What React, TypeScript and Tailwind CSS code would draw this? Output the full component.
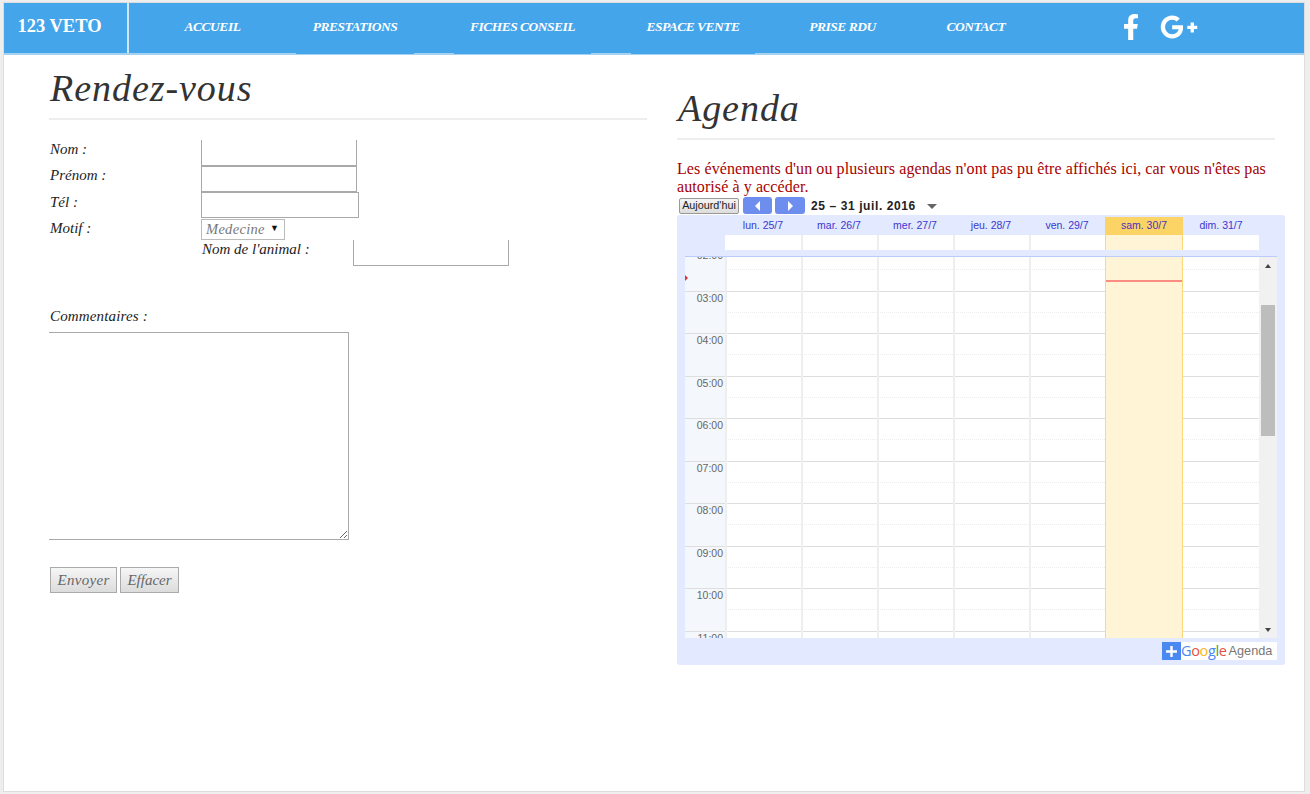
import { FaFacebookF, FaGooglePlusG } from "react-icons/fa";

const serif = "font-['Liberation_Serif',serif]";
const arial = "font-['Liberation_Sans',Arial,sans-serif]";

const nav = [
  { label: "ACCUEIL", mark: false, width: "w-[87px]" },
  { label: "PRESTATIONS", mark: true, width: "w-[118px]" },
  { label: "FICHES CONSEIL", mark: true, width: "w-[137px]" },
  { label: "ESPACE VENTE", mark: true, width: "w-[124px]" },
  { label: "PRISE RDU", mark: false, width: "w-[95px]" },
  { label: "CONTACT", mark: false, width: "w-[92px]" },
];

const days = ["lun. 25/7", "mar. 26/7", "mer. 27/7", "jeu. 28/7", "ven. 29/7", "sam. 30/7", "dim. 31/7"];
const hours = ["02:00", "03:00", "04:00", "05:00", "06:00", "07:00", "08:00", "09:00", "10:00", "11:00"];

const dayWidth = (d: string) => (d.startsWith("sam") ? "w-[78px]" : "w-[76px]");

function Header() {
  return (
    <header className="flex h-[52px] bg-[#45a5ea] border-b-2 border-[#a6d2f0] text-white">
      <div className={`w-[123px] flex items-center justify-center pr-[12px] pb-[2px] text-[18.5px] font-bold whitespace-nowrap ${serif}`}>123 VETO</div>
      <div className="w-[2px] bg-[#cfe6f8]" />
      <nav className="flex ml-[40px] gap-[40px]">
        {nav.map((n) => (
          <a key={n.label} className={`relative flex items-center justify-center ${n.width} text-[13.5px] font-bold italic tracking-[-0.5px] whitespace-nowrap pb-[2px] ${serif}`}>
            {n.label}
            {n.mark && <span className="absolute left-0 right-0 -bottom-px h-px bg-[#45a5ea]" />}
          </a>
        ))}
      </nav>
      <div className="flex items-center ml-[96px] gap-[16px] pb-[3px]">
        <FaFacebookF className="text-[26px]" />
        <FaGooglePlusG className="text-[38px]" />
      </div>
    </header>
  );
}

const labelCls = `text-[15px] leading-[19px] italic text-[#222] ${serif}`;
const inputCls = "block bg-white border border-[#a9a9a9] outline-none";

function Form() {
  return (
    <section className="w-[598px]">
      <h1 className={`h-[65px] border-b-2 border-[#eee] flex items-center pt-[4px] pl-px text-[38px] italic text-[#333] tracking-[0.95px] ${serif}`}>Rendez-vous</h1>
      <form className="mt-[20px]">
        <div className="flex h-[26px]">
          <label className={`w-[152px] pl-px ${labelCls}`}>Nom :</label>
          <input className={`${inputCls} w-[156px] h-[26px] border-t-0`} />
        </div>
        <div className="flex h-[26px]">
          <label className={`w-[152px] pl-px ${labelCls}`}>Prénom :</label>
          <input className={`${inputCls} w-[156px] h-[26px]`} />
        </div>
        <div className="flex h-[27px]">
          <label className={`w-[152px] pl-px pt-px ${labelCls}`}>Tél :</label>
          <input className={`${inputCls} w-[158px] h-[26px]`} />
        </div>
        <div className="flex h-[21px]">
          <label className={`w-[152px] pl-px ${labelCls}`}>Motif :</label>
          <div className="relative w-[84px] h-[21px]">
            <select className={`appearance-none block w-full h-full bg-white border border-[#bbb] pl-[4px] pb-[1px] text-[14.5px] leading-[17px] italic text-[#777] tracking-[0.3px] outline-none ${serif}`}>
              <option>Medecine</option>
            </select>
            <span className={`absolute right-[6px] top-[2px] text-[9px] leading-[14px] text-[#111] ${arial}`}>▼</span>
          </div>
        </div>
        <div className="flex h-[26px] pl-[152px]">
          <label className={`w-[152px] pl-px ${labelCls} text-[#111]`}>Nom de l'animal :</label>
          <input className={`${inputCls} w-[156px] h-[26px] border-t-0`} />
        </div>
        <label className={`block mt-[41px] pl-px tracking-[0.15px] ${labelCls}`}>Commentaires :</label>
        <textarea className={`${inputCls} mt-[6px] w-[300px] h-[208px] border-l-0 resize-y`} />
        <div className="flex gap-[3px] mt-[27px] ml-px">
          <button type="button" className={`w-[67px] h-[26px] border border-[#aaa] bg-gradient-to-b from-[#f6f6f6] to-[#dcdcdc] text-[15px] italic text-[#666] tracking-[0.3px] ${serif}`}>Envoyer</button>
          <button type="button" className={`w-[59px] h-[26px] border border-[#aaa] bg-gradient-to-b from-[#f6f6f6] to-[#dcdcdc] text-[15px] italic text-[#666] ${serif}`}>Effacer</button>
        </div>
      </form>
    </section>
  );
}

function DayColumn({ day }: { day: string }) {
  const today = day.startsWith("sam");
  const last = day.startsWith("dim");
  return (
    <div className={`relative ${dayWidth(day)} ${today ? "bg-[#fff5d6]" : "bg-white"}`}>
      {!today && (
        <div className="mt-[-8.75px]">
          {hours.map((h) => (
            <div key={h} className="h-[42.5px] border-t border-[#dedede]">
              <div className="h-[21px] border-b border-dotted border-[#ececec]" />
            </div>
          ))}
        </div>
      )}
      {!last && <div className={`absolute inset-y-0 left-0 ${today ? "w-px bg-[#fcd87a]" : "w-[2px] bg-[#eeeeee]"}`} />}
      {today && <div className="absolute inset-y-0 right-0 w-px bg-[#fcd87a]" />}
      {today && <div className="absolute left-px right-px top-[23px] h-[2px] bg-[#f98d82]" />}
    </div>
  );
}

function Agenda() {
  return (
    <section className="w-[598px]">
      <h1 className={`h-[65px] mt-[20px] border-b-2 border-[#eee] flex items-center pt-[4px] pl-px text-[38px] italic text-[#333] tracking-[0.95px] ${serif}`}>Agenda</h1>
      <p className={`mt-[20px] text-[16px] leading-[18px] tracking-[0.09px] text-[#a80000] ${serif}`}>
        Les événements d'un ou plusieurs agendas n'ont pas pu être affichés ici, car vous n'êtes pas autorisé à y accéder.
      </p>
      <div className={`flex items-center h-[19px] pl-[2px] ${arial}`}>
        <button type="button" className="w-[60px] h-[16px] rounded-[2px] border border-[#999] bg-gradient-to-b from-[#f4f4f4] to-[#ddd] text-[10.8px] text-[#222] leading-none whitespace-nowrap">Aujourd'hui</button>
        <button type="button" className="ml-[4px] w-[29px] h-[17px] rounded-[3px] bg-[#6d8def] flex items-center justify-center">
          <span className="w-0 h-0 border-y-[5px] border-y-transparent border-r-[5px] border-r-white" />
        </button>
        <button type="button" className="ml-[3px] w-[30px] h-[17px] rounded-[3px] bg-[#6d8def] flex items-center justify-center">
          <span className="w-0 h-0 border-y-[5px] border-y-transparent border-l-[5px] border-l-white" />
        </button>
        <span className="ml-[6px] text-[12px] font-bold text-[#222] tracking-[0.6px]">25 – 31 juil. 2016</span>
        <span className="ml-[11px] mt-[2px] w-0 h-0 border-x-[5px] border-x-transparent border-t-[5px] border-t-[#666]" />
      </div>
      <div className={`w-[608px] h-[450px] rounded-[3px] bg-[#e3e9ff] px-2 pt-[2px] ${arial}`}>
        <div className="flex h-[18px] pl-[40px]">
          {days.map((d) => (
            <div key={d} className={`${dayWidth(d)} flex items-center justify-center text-[10.5px] ${d.startsWith("sam") ? "bg-[#fcd466] text-[#4a30c0]" : "text-[#3a38cf]"}`}>{d}</div>
          ))}
        </div>
        <div className="flex h-[15px] pl-[40px]">
          {days.map((d, i) => (
            <div key={d} className={`${dayWidth(d)} ${d.startsWith("sam") ? "bg-[#fff5d6] border-x border-[#fcd87a]" : i === 0 || d.startsWith("dim") ? "bg-white" : "bg-white border-l-2 border-[#eeeeee]"}`} />
          ))}
        </div>
        <div className="h-[6px]" />
        <div className="flex h-[382px] border-t border-[#bccbf9] overflow-hidden">
          <div className="relative w-[40px] bg-[#f4f7fb] text-[10.5px] text-[#666] text-right">
            <div className="mt-[-8.75px]">
              {hours.map((h) => (
                <div key={h} className="h-[42.5px] border-t border-[#dedede] pr-[2px] leading-[13px]">{h}</div>
              ))}
            </div>
            <span className="absolute left-0 top-[18px] w-0 h-0 border-y-[3px] border-y-transparent border-l-[3px] border-l-[#d33]" />
          </div>
          {days.map((d) => (
            <DayColumn key={d} day={d} />
          ))}
          <div className="relative w-[18px] bg-[#f1f1f1] flex flex-col items-center">
            <span className="mt-[7px] w-0 h-0 border-x-[3.5px] border-x-transparent border-b-[4px] border-b-[#444]" />
            <span className="mt-[37px] w-[14px] h-[131px] bg-[#bdbdbd]" />
            <span className="mt-auto mb-[6px] w-0 h-0 border-x-[3.5px] border-x-transparent border-t-[4px] border-t-[#444]" />
          </div>
        </div>
        <div className="flex justify-end mt-[4px]">
          <div className="flex h-[18px]">
            <div className="w-[19px] h-[18px] bg-[#4a88f2] flex items-center justify-center">
              <svg width="11" height="11" viewBox="0 0 11 11"><path d="M4.3 0h2.4v4.3H11v2.4H6.7V11H4.3V6.7H0V4.3h4.3z" fill="#fff" /></svg>
            </div>
            <div className="w-[96px] bg-white flex items-center leading-none">
              <span className="font-['Open_Sans',sans-serif] font-medium text-[14.5px] tracking-[-0.35px]">
                <span className="text-[#4a88f2]">G</span>
                <span className="text-[#e8503f]">o</span>
                <span className="text-[#f5b90f]">o</span>
                <span className="text-[#4a88f2]">g</span>
                <span className="text-[#2da94f]">l</span>
                <span className="text-[#e8503f]">e</span>
              </span>
              <span className="ml-[2px] text-[#777] text-[12.7px]">Agenda</span>
            </div>
          </div>
        </div>
      </div>
    </section>
  );
}

export default function App() {
  return (
    <div className="h-[794px] overflow-hidden bg-[#eeeeee] pt-[2px] pl-[3px]">
      <div className="w-[1302px] h-[790px] bg-white border border-[#dddddd]">
        <Header />
        <main className="flex gap-[30px] pl-[45px]">
          <Form />
          <Agenda />
        </main>
      </div>
    </div>
  );
}
